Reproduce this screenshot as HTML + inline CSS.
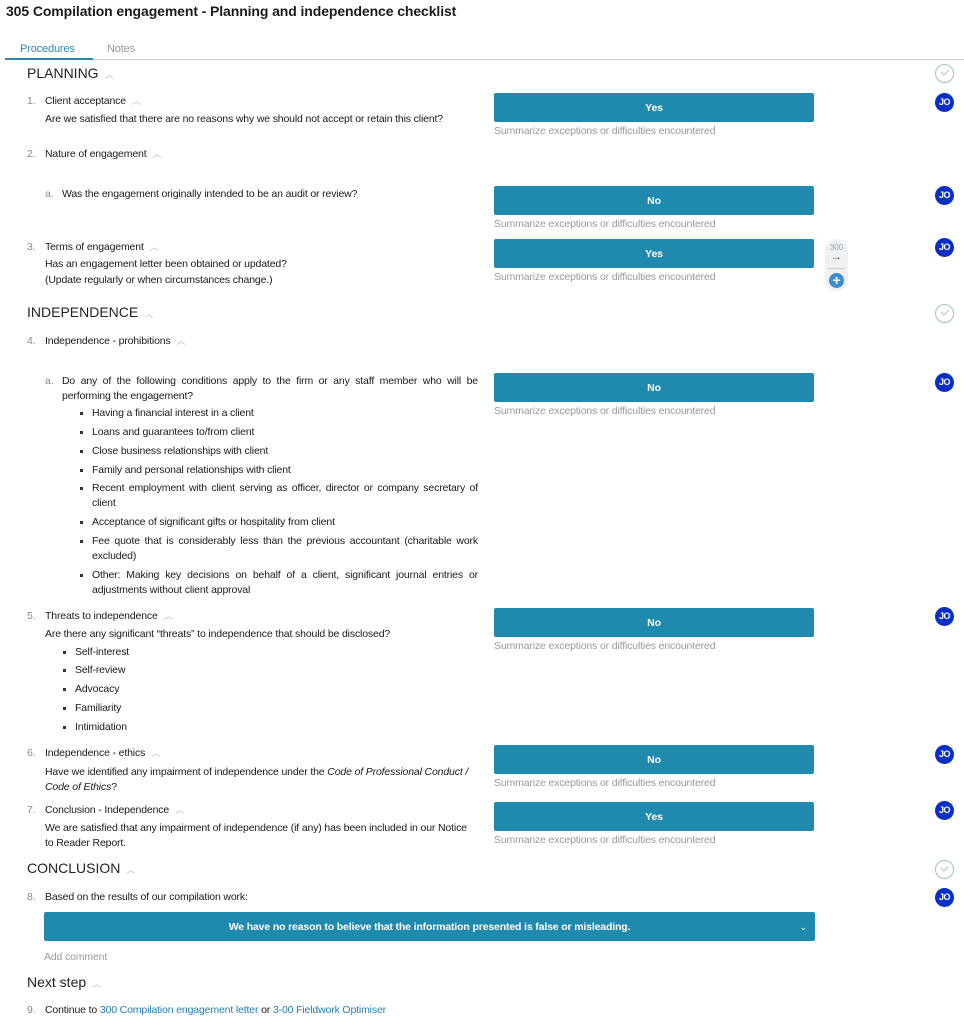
<!DOCTYPE html>
<html><head><meta charset="utf-8"><style>
*{margin:0;padding:0;box-sizing:border-box}
body{width:964px;height:1019px;background:#fff;font-family:"Liberation Sans",sans-serif;color:#1a1a1a;position:relative;overflow:hidden;font-size:10.5px;letter-spacing:-0.15px}
.a{position:absolute;line-height:14px;white-space:nowrap;margin-top:1px}
.n{color:#888}
.h{font-size:14px;letter-spacing:0;color:#222}
.car{color:#bbb;font-size:9px;margin-left:6px}
.btn{position:absolute;left:494px;width:320px;height:29px;background:#1f8aad;border-radius:2px;color:#fff;font-weight:bold;font-size:10.5px;text-align:center;line-height:30px}
.sum{position:absolute;left:494px;color:#999;line-height:14px;white-space:nowrap;margin-top:1px}
.jo{position:absolute;left:935px;width:19px;height:19px;border-radius:50%;background:#0a2fc4;color:#fff;font-weight:bold;font-size:9px;text-align:center;line-height:19px;letter-spacing:-0.5px}
.ck{position:absolute;left:935px;width:19px;height:19px;border-radius:50%;border:1.5px solid #9ccaa9}
.ck:after{content:"";position:absolute;left:5px;top:4px;width:6px;height:3.5px;border-left:1.3px solid #9ccaa9;border-bottom:1.3px solid #9ccaa9;transform:rotate(-45deg)}
.j{text-align:justify;text-align-last:justify;white-space:normal}
.b:before{content:"";position:absolute;left:-12px;top:6px;width:2.5px;height:2.5px;background:#333}
a{color:#1f7fb5;text-decoration:none}
</style></head><body>
<div class="a" style="left:6px;top:2px;font-size:14px;font-weight:bold;letter-spacing:-0.1px;line-height:16px">305 Compilation engagement - Planning and independence checklist</div>
<div class="a" style="left:20px;top:41px;color:#2a86b0;font-size:11px">Procedures</div>
<div class="a" style="left:107px;top:41px;color:#999;font-size:11px">Notes</div>
<div style="position:absolute;left:5px;top:59px;width:959px;height:1px;background:#ccc"></div>
<div style="position:absolute;left:5px;top:58px;width:88px;height:2px;background:#2a86b0"></div>

<div class="a h" style="left:27px;top:65px">PLANNING<span class="car">︿</span></div>
<div class="ck" style="top:64px"></div>

<div class="a n" style="left:27px;top:93px">1.</div>
<div class="a" style="left:45px;top:93px">Client acceptance<span class="car">︿</span></div>
<div class="a" style="left:45px;top:111px">Are we satisfied that there are no reasons why we should not accept or retain this client?</div>
<div class="btn" style="top:93px">Yes</div><div class="sum" style="top:123px">Summarize exceptions or difficulties encountered</div>
<div class="jo" style="top:93px">JO</div>

<div class="a n" style="left:27px;top:146px">2.</div>
<div class="a" style="left:45px;top:146px">Nature of engagement<span class="car">︿</span></div>
<div class="a n" style="left:45px;top:186px">a.</div>
<div class="a" style="left:62px;top:186px">Was the engagement originally intended to be an audit or review?</div>
<div class="btn" style="top:186px">No</div><div class="sum" style="top:216px">Summarize exceptions or difficulties encountered</div>
<div class="jo" style="top:186px">JO</div>

<div class="a n" style="left:27px;top:239px">3.</div>
<div class="a" style="left:45px;top:239px">Terms of engagement<span class="car">︿</span></div>
<div class="a" style="left:45px;top:256px">Has an engagement letter been obtained or updated?</div>
<div class="a" style="left:45px;top:272px">(Update regularly or when circumstances change.)</div>
<div class="btn" style="top:239px">Yes</div><div class="sum" style="top:269px">Summarize exceptions or difficulties encountered</div>
<div class="jo" style="top:238px">JO</div>
<div style="position:absolute;left:825px;top:239px;width:23px;height:52px;border-radius:12px;background:#f0f0f0"></div>
<div class="a" style="left:830px;top:242px;font-size:8px;color:#8ab;line-height:9px">300</div>
<div class="a" style="left:831px;top:250px;font-size:11px;color:#555;line-height:12px">→</div>
<div style="position:absolute;left:828px;top:268px;width:17px;height:1px;background:#ccc"></div>
<div style="position:absolute;left:829px;top:273px;width:15px;height:15px;border-radius:50%;background:#3a8fd0;color:#fff;text-align:center;line-height:15px;font-size:14px;font-weight:bold">+</div>

<div class="a h" style="left:27px;top:304px">INDEPENDENCE<span class="car">︿</span></div>
<div class="ck" style="top:304px"></div>
<div class="a n" style="left:27px;top:333px">4.</div>
<div class="a" style="left:45px;top:333px">Independence - prohibitions<span class="car">︿</span></div>
<div class="a n" style="left:45px;top:373px">a.</div>
<div class="a j" style="left:62px;top:373px;width:416px">Do any of the following conditions apply to the firm or any staff member who will be</div>
<div class="a" style="left:62px;top:388px">performing the engagement?</div>
<div class="a b" style="left:92px;top:405px">Having a financial interest in a client</div>
<div class="a b" style="left:92px;top:424px">Loans and guarantees to/from client</div>
<div class="a b" style="left:92px;top:443px">Close business relationships with client</div>
<div class="a b" style="left:92px;top:462px">Family and personal relationships with client</div>
<div class="a b j" style="left:92px;top:480px;width:386px">Recent employment with client serving as officer, director or company secretary of</div>
<div class="a" style="left:92px;top:495px">client</div>
<div class="a b" style="left:92px;top:514px">Acceptance of significant gifts or hospitality from client</div>
<div class="a b j" style="left:92px;top:533px;width:386px">Fee quote that is considerably less than the previous accountant (charitable work</div>
<div class="a" style="left:92px;top:548px">excluded)</div>
<div class="a b j" style="left:92px;top:567px;width:386px">Other: Making key decisions on behalf of a client, significant journal entries or</div>
<div class="a" style="left:92px;top:582px">adjustments without client approval</div>
<div class="btn" style="top:373px">No</div><div class="sum" style="top:403px">Summarize exceptions or difficulties encountered</div>
<div class="jo" style="top:373px">JO</div>

<div class="a n" style="left:27px;top:608px">5.</div>
<div class="a" style="left:45px;top:608px">Threats to independence<span class="car">︿</span></div>
<div class="a" style="left:45px;top:626px">Are there any significant “threats” to independence that should be disclosed?</div>
<div class="a b" style="left:75px;top:644px">Self-interest</div>
<div class="a b" style="left:75px;top:662px">Self-review</div>
<div class="a b" style="left:75px;top:681px">Advocacy</div>
<div class="a b" style="left:75px;top:700px">Familiarity</div>
<div class="a b" style="left:75px;top:719px">Intimidation</div>
<div class="btn" style="top:608px">No</div><div class="sum" style="top:638px">Summarize exceptions or difficulties encountered</div>
<div class="jo" style="top:607px">JO</div>

<div class="a n" style="left:27px;top:745px">6.</div>
<div class="a" style="left:45px;top:745px">Independence - ethics<span class="car">︿</span></div>
<div class="a" style="left:45px;top:764px">Have we identified any impairment of independence under the <i>Code of Professional Conduct /</i></div>
<div class="a" style="left:45px;top:779px"><i>Code of Ethics</i>?</div>
<div class="btn" style="top:745px">No</div><div class="sum" style="top:775px">Summarize exceptions or difficulties encountered</div>
<div class="jo" style="top:745px">JO</div>

<div class="a n" style="left:27px;top:802px">7.</div>
<div class="a" style="left:45px;top:802px">Conclusion - Independence<span class="car">︿</span></div>
<div class="a" style="left:45px;top:820px">We are satisfied that any impairment of independence (if any) has been included in our Notice</div>
<div class="a" style="left:45px;top:835px">to Reader Report.</div>
<div class="btn" style="top:802px">Yes</div><div class="sum" style="top:832px">Summarize exceptions or difficulties encountered</div>
<div class="jo" style="top:801px">JO</div>

<div class="a h" style="left:27px;top:860px">CONCLUSION<span class="car">︿</span></div>
<div class="ck" style="top:860px"></div>
<div class="a n" style="left:27px;top:889px">8.</div>
<div class="a" style="left:45px;top:889px">Based on the results of our compilation work:</div>
<div class="jo" style="top:888px">JO</div>
<div class="btn" style="left:44px;width:771px;top:912px">We have no reason to believe that the information presented is false or misleading.<span style="position:absolute;right:8px;font-weight:normal;font-size:9px">⌄</span></div>
<div class="a" style="left:44px;top:949px;color:#999">Add comment</div>

<div class="a h" style="left:27px;top:974px">Next step<span class="car">︿</span></div>
<div class="a n" style="left:27px;top:1002px">9.</div>
<div class="a" style="left:45px;top:1002px">Continue to <a>300 Compilation engagement letter</a> or <a>3-00 Fieldwork Optimiser</a></div>
</body></html>
